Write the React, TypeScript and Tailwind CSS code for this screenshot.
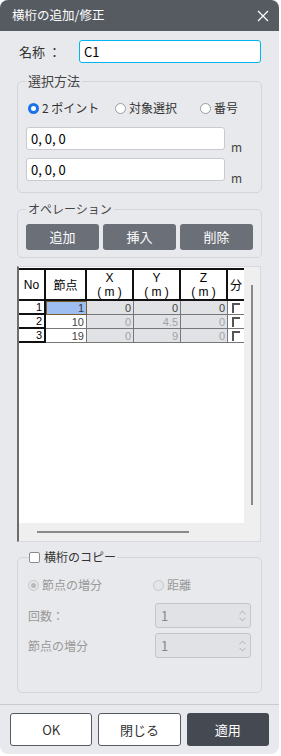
import { ChevronUp, ChevronDown } from "lucide-react";

const jp = { fontFamily: "'Noto Sans CJK JP', 'Noto Sans', sans-serif" };
const narrow = { fontFamily: "'Liberation Sans Narrow', 'Liberation Sans', sans-serif" };

const rows = [
  { no: "1", node: "1", x: "0", y: "0", z: "0", sel: true },
  { no: "2", node: "10", x: "0", y: "4.5", z: "0", sel: false },
  { no: "3", node: "19", x: "0", y: "9", z: "0", sel: false },
];

function Radio({ checked, disabled }: { checked?: boolean; disabled?: boolean }) {
  if (checked && !disabled) {
    return <span className="w-[11px] h-[11px] rounded-full border-[3px] border-[#1a73e8] bg-white shrink-0" />;
  }
  if (checked && disabled) {
    return (
      <span className="w-[11px] h-[11px] rounded-full border border-[#c5c7cb] bg-[#e4e5e8] flex items-center justify-center shrink-0">
        <span className="w-[5px] h-[5px] rounded-full bg-[#b8babe]" />
      </span>
    );
  }
  return (
    <span
      className={`w-[11px] h-[11px] rounded-full border shrink-0 ${
        disabled ? "border-[#c5c7cb] bg-[#e4e5e8]" : "border-[#9a9ca0] bg-white"
      }`}
    />
  );
}

function Spinner() {
  return (
    <div className="w-[96px] h-[25px] border border-[#c3c5c9] rounded-[3px] bg-[#e1e2e5] flex items-center justify-between pl-[5px] pr-[2px]">
      <span className="text-[13px] text-[#888]">1</span>
      <div className="flex flex-col items-center text-[#a8aaae] -space-y-[4px]">
        <ChevronUp size={11} strokeWidth={2} />
        <ChevronDown size={11} strokeWidth={2} />
      </div>
    </div>
  );
}

export default function App() {
  return (
    <div className="w-[281px] h-[756px] bg-white" style={jp}>
      <div className="w-[279px] h-[754px] bg-[#e8e9ec] rounded-lg overflow-hidden">
        <div className="h-[31px] bg-[#565b62] flex items-center justify-between pl-[12px] pr-[10px]">
          <span className="text-white text-[12.5px]">横桁の追加/修正</span>
          <svg width="12" height="12" viewBox="0 0 12 12">
            <path d="M1 1 L11 11 M11 1 L1 11" stroke="white" strokeWidth="1.3" />
          </svg>
        </div>

        <div className="px-[17px] pt-[9px]">
          <div className="flex items-center h-[23px]">
            <span className="w-[62px] pl-[2px] text-[13px] text-[#333]">名称 ：</span>
            <div className="w-[182px] h-[23px] bg-white border border-[#00b4f0] rounded-[3px] flex items-center px-[4px] text-[13px] text-black">
              C1
            </div>
          </div>

          <fieldset className="mt-[10px] h-[120px] border border-[#d3d5d9] rounded-[5px] px-[8px]">
            <legend className="text-[13px] text-[#444] px-[2px] leading-[16px]">選択方法</legend>
            <div className="flex items-center h-[20px] mt-[9px] ml-[2px] text-[12px] text-[#333]">
              <div className="flex items-center gap-[3px] w-[87px]">
                <Radio checked />
                <span>2 ポイント</span>
              </div>
              <div className="flex items-center gap-[3px] w-[85px]">
                <Radio />
                <span>対象選択</span>
              </div>
              <div className="flex items-center gap-[3px]">
                <Radio />
                <span>番号</span>
              </div>
            </div>
            <div className="flex items-end mt-[9px]">
              <div className="w-[199px] h-[23px] bg-white border border-[#c8cacd] rounded-[3px] flex items-center px-[4px] text-[13px] text-black">
                0, 0, 0
              </div>
              <span className="ml-[6px] text-[12px] text-[#444] leading-[14px] -mb-[4px]">m</span>
            </div>
            <div className="flex items-end mt-[8px]">
              <div className="w-[199px] h-[23px] bg-white border border-[#c8cacd] rounded-[3px] flex items-center px-[4px] text-[13px] text-black">
                0, 0, 0
              </div>
              <span className="ml-[6px] text-[12px] text-[#444] leading-[14px] -mb-[4px]">m</span>
            </div>
          </fieldset>

          <fieldset className="mt-[8px] h-[57px] border border-[#d3d5d9] rounded-[5px] px-[8px]">
            <legend className="text-[12px] text-[#444] px-[2px] leading-[16px]">オペレーション</legend>
            <div className="flex gap-[4px] mt-[7px]">
              {["追加", "挿入", "削除"].map((t) => (
                <button key={t} className="w-[73px] h-[26px] bg-[#6b7078] rounded-[3px] text-white text-[13px]">
                  {t}
                </button>
              ))}
            </div>
          </fieldset>

          <div className="mt-[8px] w-[244px] h-[276px] border border-[#d8d9dc] border-l-2 border-l-[#6d6d6d] bg-[#efefef] flex flex-col">
            <div className="flex h-[256px]">
              <div className="w-[225px] bg-white flex flex-col">
                <div className="flex h-[33px] mt-[1px] border-t-2 border-[#111] text-[12px] leading-[14px] text-black">
                  <div className="w-[27px] border-r-2 border-b-2 border-[#111] flex items-center justify-center" style={narrow}>
                    No
                  </div>
                  <div className="w-[41px] border-r-2 border-b-2 border-[#111] flex items-center justify-center">節点</div>
                  {["X", "Y", "Z"].map((c) => (
                    <div
                      key={c}
                      className="w-[47px] border-r-2 border-b-2 border-[#111] flex flex-col items-center justify-center text-[12px] leading-[14px]"
                      style={narrow}
                    >
                      <span className="block h-[14px]">{c}</span>
                      <span className="block h-[14px]">( m )</span>
                    </div>
                  ))}
                  <div className="w-[16px] border-b-2 border-[#111] flex items-center pl-[2px] overflow-hidden whitespace-nowrap">分</div>
                </div>
                {rows.map((r) => (
                  <div key={r.no} className="flex h-[14px] text-[11px] leading-[12px]" style={narrow}>
                    <div className="w-[27px] border-r-2 border-b-2 border-[#111] flex items-center justify-end pr-[2px] text-black">
                      {r.no}
                    </div>
                    <div
                      className={`w-[41px] border-b border-r border-[#777] flex items-center justify-end pr-[2px] ${
                        r.sel ? "bg-[#9ebdf0] outline outline-[#7a5a2a] -outline-offset-1 text-[#333]" : "bg-white text-[#444]"
                      }`}
                    >
                      {r.node}
                    </div>
                    {[r.x, r.y, r.z].map((v, i) => (
                      <div
                        key={i}
                        className={`w-[47px] bg-[#e0e2e6] border-b border-r border-[#777] flex items-center justify-end pr-[2px] ${
                          r.sel ? "text-[#444]" : "text-[#a0a2a6]"
                        }`}
                      >
                        {v}
                      </div>
                    ))}
                    <div className="w-[16px] bg-white border-b border-[#777] flex items-center pl-[4px]">
                      <span className="w-[8px] h-[10px] border-l-2 border-t-2 border-[#555]" />
                    </div>
                  </div>
                ))}
              </div>
              <div className="flex-1 flex justify-center pt-[18px]">
                <div className="w-[2px] h-[220px] bg-[#8a8a8a]" />
              </div>
            </div>
            <div className="pl-[18px] pt-[8px]">
              <div className="w-[152px] h-[2px] bg-[#8a8a8a]" />
            </div>
          </div>

          <fieldset className="mt-[7px] h-[144px] border border-[#d3d5d9] rounded-[5px] px-[10px]">
            <legend className="flex items-center gap-[4px] px-[1px] leading-[16px]">
              <span className="w-[11px] h-[11px] bg-white border border-[#8a8c90] rounded-[2px]" />
              <span className="text-[12px] text-[#333]">横桁のコピー</span>
            </legend>
            <div className="flex items-center h-[18px] mt-[11px] text-[12px] text-[#999]">
              <div className="flex items-center gap-[3px] w-[125px]">
                <Radio checked disabled />
                <span>節点の増分</span>
              </div>
              <div className="flex items-center gap-[3px]">
                <Radio disabled />
                <span>距離</span>
              </div>
            </div>
            <div className="flex items-center justify-between mt-[9px] text-[12px] text-[#999]">
              <span>回数：</span>
              <Spinner />
            </div>
            <div className="flex items-center justify-between mt-[5px] text-[12px] text-[#999]">
              <span>節点の増分</span>
              <Spinner />
            </div>
          </fieldset>
        </div>

        <div className="border-t border-[#c9cbcf] mt-[11px] flex gap-[6px] px-[10px] pt-[8px]">
          <button className="w-[83px] h-[33px] bg-white border border-[#555a61] rounded-[3px] text-[13px] text-[#333]">OK</button>
          <button className="w-[83px] h-[33px] bg-white border border-[#555a61] rounded-[3px] text-[13px] text-[#333]">閉じる</button>
          <button className="w-[83px] h-[33px] bg-[#454a52] rounded-[3px] text-[13px] text-white">適用</button>
        </div>
      </div>
    </div>
  );
}
